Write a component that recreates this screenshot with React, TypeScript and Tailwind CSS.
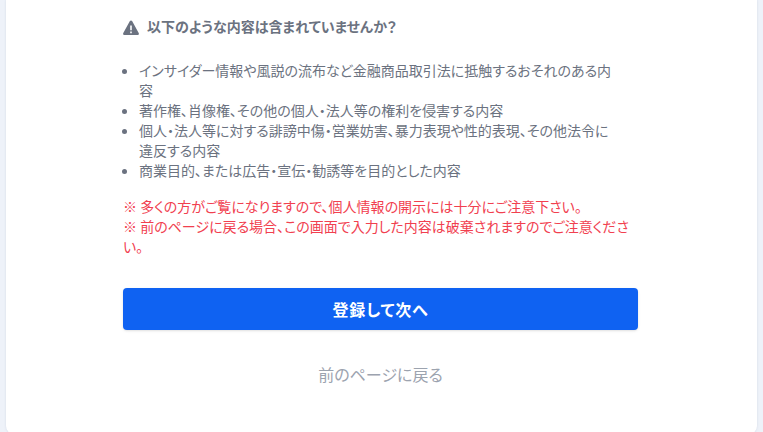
const items = [
  "インサイダー情報や風説の流布など金融商品取引法に抵触するおそれのある内容",
  "著作権、肖像権、その他の個人・法人等の権利を侵害する内容",
  "個人・法人等に対する誹謗中傷・営業妨害、暴力表現や性的表現、その他法令に違反する内容",
  "商業目的、または広告・宣伝・勧誘等を目的とした内容",
]

export default function App() {
  return (
    <div className="h-[432px] overflow-hidden bg-[#eef2f9] px-[6px] font-['Noto_Sans_CJK_JP',sans-serif] [font-feature-settings:'palt']">
      <div className="h-[434px] rounded-b-lg bg-white pl-[117px] pr-[119px] pt-[16px] shadow-[0_0_2px_rgba(180,190,210,0.5)]">
        <div className="flex h-5 items-center gap-[8px] text-sm font-bold text-[#6b7280]">
          <svg viewBox="0 0 16 16" className="mt-[3px] h-4 w-4 fill-[#6b7280]">
            <path
              fillRule="evenodd"
              d="M6.9 1.1c.5-.9 1.7-.9 2.2 0l6.6 11.9c.5.9-.1 2-1.1 2H1.4c-1 0-1.6-1.1-1.1-2L6.9 1.1ZM7.2 5.4v4.8h1.6V5.4H7.2Zm0 6v1.8h1.6v-1.8H7.2Z"
            />
          </svg>
          <span>以下のような内容は含まれていませんか？</span>
        </div>
        <ul className="mt-[24px] list-disc pl-4 pr-[18px] text-sm leading-[20px] text-[#6b7280]">
          {items.map((item) => (
            <li key={item}>{item}</li>
          ))}
        </ul>
        <div className="mt-[16px] text-sm leading-[20px] text-[#f1404f]">
          <p>※ 多くの方がご覧になりますので、個人情報の開示には十分にご注意下さい。</p>
          <p>※ 前のページに戻る場合、この画面で入力した内容は破棄されますのでご注意ください。</p>
        </div>
        <button className="mt-[32px] flex h-[42px] w-full items-center justify-center rounded bg-[#0f62f2] text-base font-bold tracking-wider text-white shadow-sm">
          登録して次へ
        </button>
        <div className="mt-[33px] text-center text-base leading-[22px] text-[#9ca3af]">前のページに戻る</div>
      </div>
    </div>
  )
}
